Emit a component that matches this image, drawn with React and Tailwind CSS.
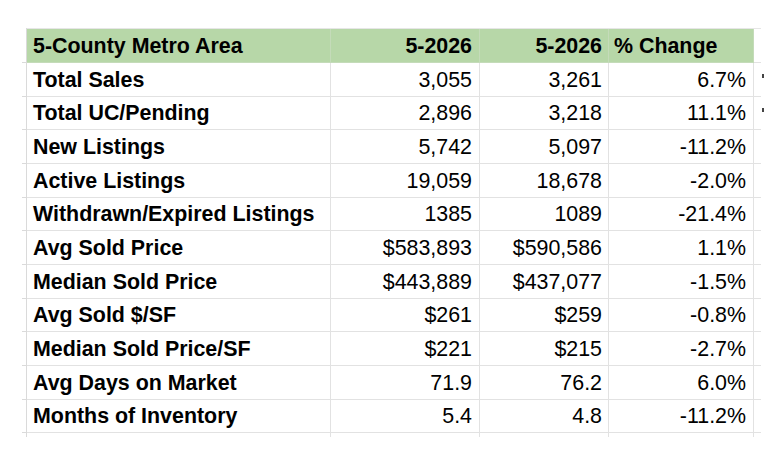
import React from "react";

const rows = [
  ["Total Sales", "3,055", "3,261", "6.7%", true],
  ["Total UC/Pending", "2,896", "3,218", "11.1%", true],
  ["New Listings", "5,742", "5,097", "-11.2%"],
  ["Active Listings", "19,059", "18,678", "-2.0%"],
  ["Withdrawn/Expired Listings", "1385", "1089", "-21.4%"],
  ["Avg Sold Price", "$583,893", "$590,586", "1.1%"],
  ["Median Sold Price", "$443,889", "$437,077", "-1.5%"],
  ["Avg Sold $/SF", "$261", "$259", "-0.8%"],
  ["Median Sold Price/SF", "$221", "$215", "-2.7%"],
  ["Avg Days on Market", "71.9", "76.2", "6.0%"],
  ["Months of Inventory", "5.4", "4.8", "-11.2%"],
];

export default function App() {
  return (
    <div
      className="w-[780px] h-[458px] bg-white overflow-hidden pt-[28px] pl-[22px] text-black"
      style={{ fontFamily: '"Liberation Sans", Arial, sans-serif' }}
    >
      <div className="grid grid-cols-[5px_304px_149px_129px_145px_7px_8px] text-[21.4px] leading-none">
        {/* top hairline row */}
        <div className="h-[1px] border-r border-[#dadada]" />
        <div className="h-[1px] bg-[#e6e6e6] col-span-5" />
        <div />

        {/* header */}
        <div className="h-[34px] border-r border-b border-[#dadada]" />
        <div className="h-[34px] bg-[#b7d7a8] border-r border-b border-[#c4dbb9] flex items-center pl-[6px] pt-[2px] font-bold">
          5-County Metro Area
        </div>
        <div className="h-[34px] bg-[#b7d7a8] border-r border-b border-[#c4dbb9] flex items-center justify-end pr-[7px] pt-[2px] font-bold">
          5-2026
        </div>
        <div className="h-[34px] bg-[#b7d7a8] border-r border-b border-[#c4dbb9] flex items-center justify-end pr-[6px] pt-[2px] font-bold">
          5-2026
        </div>
        <div className="h-[34px] bg-[#b7d7a8] border-r border-b border-[#c4dbb9] flex items-center pl-[5px] pt-[2px] font-bold">
          % Change
        </div>
        <div className="h-[34px] border-b border-[#e2e2e2]" />
        <div />

        {rows.map(([label, a, b, c, mark], i) => (
          <React.Fragment key={i}>
            <div className="h-[33.67px] border-r border-b border-[#dadada]" />
            <div className="h-[33.67px] border-r border-b border-[#e2e2e2] flex items-center pl-[6px] pt-[2px] font-bold">
              {label}
            </div>
            <div className="h-[33.67px] border-r border-b border-[#e2e2e2] flex items-center justify-end pr-[7px] pt-[2px]">
              {a}
            </div>
            <div className="h-[33.67px] border-r border-b border-[#e2e2e2] flex items-center justify-end pr-[6px] pt-[2px]">
              {b}
            </div>
            <div className="h-[33.67px] border-r border-b border-[#e2e2e2] flex items-center justify-end pr-[7px] pt-[2px]">
              {c}
            </div>
            <div className="h-[33.67px] border-b border-[#e2e2e2]" />
            <div className="h-[33.67px] flex items-start pt-[11px] pl-[1px]">
              {mark ? <span className="block w-[2px] h-[4px] bg-[#444]" /> : null}
            </div>
          </React.Fragment>
        ))}

        {/* partial row at bottom */}
        <div className="h-[4px] border-r border-[#dadada]" />
        <div className="h-[4px] border-r border-[#e2e2e2]" />
        <div className="h-[4px] border-r border-[#e2e2e2]" />
        <div className="h-[4px] border-r border-[#e2e2e2]" />
        <div className="h-[4px] border-r border-[#e2e2e2]" />
        <div />
        <div />
      </div>
    </div>
  );
}
